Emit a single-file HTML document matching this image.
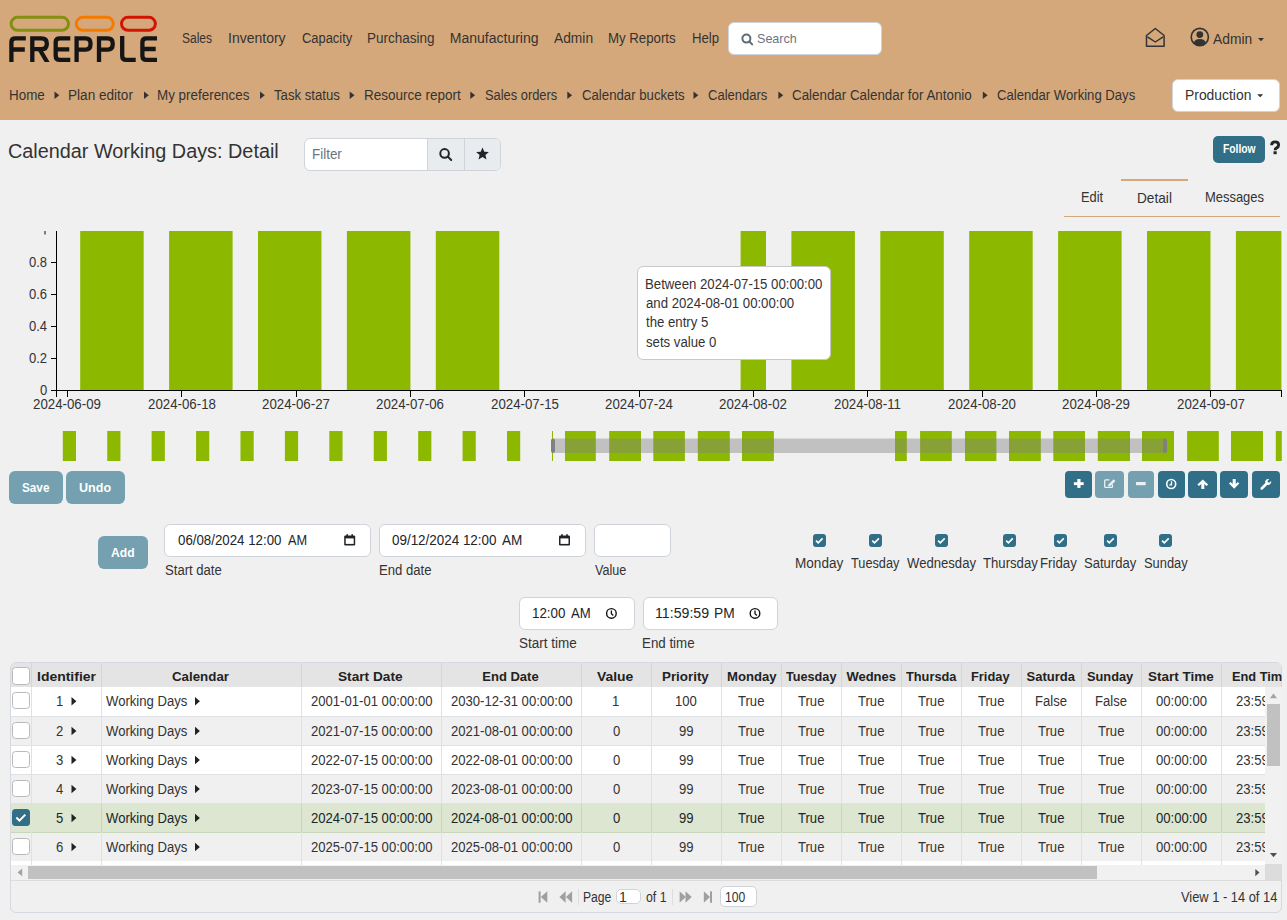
<!DOCTYPE html><html><head><meta charset='utf-8'><style>
html,body{margin:0;padding:0;width:1287px;height:920px;overflow:hidden;background:#f0f0f0;font-family:"Liberation Sans",sans-serif;}
.t{position:absolute;white-space:pre;font-family:"Liberation Sans",sans-serif;}
</style></head><body>
<div style='position:absolute;left:0;top:0;width:1287px;height:120px;background:#d4a87b'></div><div style='position:absolute;left:728px;top:22px;width:152px;height:31px;background:#fff;border:1px solid #ced4da;border-radius:6px'></div><div style='position:absolute;left:1172px;top:79px;width:106px;height:31px;background:#fff;border:1px solid #ced4da;border-radius:6px'></div><div style='position:absolute;left:304px;top:138px;width:195px;height:31px;background:#fff;border:1px solid #ced4da;border-radius:6px;overflow:hidden'><div style='position:absolute;left:122px;top:0;width:37px;height:31px;background:#e9ecef;border-left:1px solid #ced4da'></div><div style='position:absolute;left:159px;top:0;width:36px;height:31px;background:#e9ecef;border-left:1px solid #ced4da'></div></div><div style='position:absolute;left:1213px;top:136px;width:52px;height:27px;background:#306f87;border-radius:5px'></div><div style='position:absolute;left:1121px;top:179px;width:67px;height:2px;background:#d4a87b'></div><div style='position:absolute;left:1064px;top:216px;width:216px;height:1px;background:#d4a87b'></div><div style='position:absolute;left:9px;top:471px;width:54px;height:33px;background:#74a0b0;border-radius:6px'></div><div style='position:absolute;left:66px;top:471px;width:59px;height:33px;background:#74a0b0;border-radius:6px'></div><div style='position:absolute;left:1065px;top:471px;width:27px;height:27px;background:#306f87;border-radius:4px'></div><div style='position:absolute;left:1095px;top:471px;width:29px;height:27px;background:#74a0b0;border-radius:4px'></div><div style='position:absolute;left:1128px;top:471px;width:26px;height:27px;background:#74a0b0;border-radius:4px'></div><div style='position:absolute;left:1158px;top:471px;width:27px;height:27px;background:#306f87;border-radius:4px'></div><div style='position:absolute;left:1188px;top:471px;width:29px;height:27px;background:#306f87;border-radius:4px'></div><div style='position:absolute;left:1220px;top:471px;width:28px;height:27px;background:#306f87;border-radius:4px'></div><div style='position:absolute;left:1252px;top:471px;width:28px;height:27px;background:#306f87;border-radius:4px'></div><div style='position:absolute;left:98px;top:536px;width:50px;height:33px;background:#74a0b0;border-radius:6px'></div><div style='position:absolute;left:164px;top:524px;width:205px;height:31px;background:#fff;border:1px solid #ced4da;border-radius:6px'></div><div style='position:absolute;left:379px;top:524px;width:205px;height:31px;background:#fff;border:1px solid #ced4da;border-radius:6px'></div><div style='position:absolute;left:594px;top:524px;width:75px;height:31px;background:#fff;border:1px solid #ced4da;border-radius:6px'></div><div style='position:absolute;left:519px;top:597px;width:114px;height:31px;background:#fff;border:1px solid #ced4da;border-radius:6px'></div><div style='position:absolute;left:643px;top:597px;width:133px;height:31px;background:#fff;border:1px solid #ced4da;border-radius:6px'></div><div style='position:absolute;left:812.8px;top:534px;width:13px;height:13px;background:#306f87;border-radius:3px'></div><div style='position:absolute;left:869.1px;top:534px;width:13px;height:13px;background:#306f87;border-radius:3px'></div><div style='position:absolute;left:934.9px;top:534px;width:13px;height:13px;background:#306f87;border-radius:3px'></div><div style='position:absolute;left:1003.0px;top:534px;width:13px;height:13px;background:#306f87;border-radius:3px'></div><div style='position:absolute;left:1054.0px;top:534px;width:13px;height:13px;background:#306f87;border-radius:3px'></div><div style='position:absolute;left:1103.9px;top:534px;width:13px;height:13px;background:#306f87;border-radius:3px'></div><div style='position:absolute;left:1158.9px;top:534px;width:13px;height:13px;background:#306f87;border-radius:3px'></div><div style='position:absolute;left:10px;top:662px;width:1270px;height:249px;border:1px solid #d3d9df;border-radius:6px;background:#f0f0f0'></div><div style='position:absolute;left:11px;top:663px;width:1270px;height:24px;background:#e4e4e4;border-top-right-radius:5px;border-top-left-radius:5px'></div><div style='position:absolute;left:11px;top:687px;width:1254px;height:29px;background:#ffffff;'></div><div style='position:absolute;left:11px;top:716px;width:1254px;height:29px;background:#f0f0f0;'></div><div style='position:absolute;left:11px;top:745px;width:1254px;height:29px;background:#ffffff;'></div><div style='position:absolute;left:11px;top:774px;width:1254px;height:29px;background:#f0f0f0;'></div><div style='position:absolute;left:11px;top:803px;width:1254px;height:29px;background:#dce6d1;'></div><div style='position:absolute;left:11px;top:832px;width:1254px;height:29px;background:#f0f0f0;'></div><div style='position:absolute;left:11px;top:716px;width:1254px;height:1px;background:#dee2e6'></div><div style='position:absolute;left:11px;top:745px;width:1254px;height:1px;background:#dee2e6'></div><div style='position:absolute;left:11px;top:774px;width:1254px;height:1px;background:#dee2e6'></div><div style='position:absolute;left:11px;top:803px;width:1254px;height:1px;background:#dee2e6'></div><div style='position:absolute;left:11px;top:832px;width:1254px;height:1px;background:#c9d6bb'></div><div style='position:absolute;left:11px;top:861px;width:1254px;height:1px;background:#dee2e6'></div><div style='position:absolute;left:11px;top:861px;width:1254px;height:4px;background:#fff'></div><div style='position:absolute;left:31px;top:663px;width:1px;height:24px;background:#d6d6d6'></div><div style='position:absolute;left:31px;top:687px;width:1px;height:178px;background:#dee2e6'></div><div style='position:absolute;left:101px;top:663px;width:1px;height:24px;background:#d6d6d6'></div><div style='position:absolute;left:101px;top:687px;width:1px;height:178px;background:#dee2e6'></div><div style='position:absolute;left:301px;top:663px;width:1px;height:24px;background:#d6d6d6'></div><div style='position:absolute;left:301px;top:687px;width:1px;height:178px;background:#dee2e6'></div><div style='position:absolute;left:441px;top:663px;width:1px;height:24px;background:#d6d6d6'></div><div style='position:absolute;left:441px;top:687px;width:1px;height:178px;background:#dee2e6'></div><div style='position:absolute;left:581px;top:663px;width:1px;height:24px;background:#d6d6d6'></div><div style='position:absolute;left:581px;top:687px;width:1px;height:178px;background:#dee2e6'></div><div style='position:absolute;left:651px;top:663px;width:1px;height:24px;background:#d6d6d6'></div><div style='position:absolute;left:651px;top:687px;width:1px;height:178px;background:#dee2e6'></div><div style='position:absolute;left:721px;top:663px;width:1px;height:24px;background:#d6d6d6'></div><div style='position:absolute;left:721px;top:687px;width:1px;height:178px;background:#dee2e6'></div><div style='position:absolute;left:781px;top:663px;width:1px;height:24px;background:#d6d6d6'></div><div style='position:absolute;left:781px;top:687px;width:1px;height:178px;background:#dee2e6'></div><div style='position:absolute;left:841px;top:663px;width:1px;height:24px;background:#d6d6d6'></div><div style='position:absolute;left:841px;top:687px;width:1px;height:178px;background:#dee2e6'></div><div style='position:absolute;left:901px;top:663px;width:1px;height:24px;background:#d6d6d6'></div><div style='position:absolute;left:901px;top:687px;width:1px;height:178px;background:#dee2e6'></div><div style='position:absolute;left:961px;top:663px;width:1px;height:24px;background:#d6d6d6'></div><div style='position:absolute;left:961px;top:687px;width:1px;height:178px;background:#dee2e6'></div><div style='position:absolute;left:1021px;top:663px;width:1px;height:24px;background:#d6d6d6'></div><div style='position:absolute;left:1021px;top:687px;width:1px;height:178px;background:#dee2e6'></div><div style='position:absolute;left:1081px;top:663px;width:1px;height:24px;background:#d6d6d6'></div><div style='position:absolute;left:1081px;top:687px;width:1px;height:178px;background:#dee2e6'></div><div style='position:absolute;left:1141px;top:663px;width:1px;height:24px;background:#d6d6d6'></div><div style='position:absolute;left:1141px;top:687px;width:1px;height:178px;background:#dee2e6'></div><div style='position:absolute;left:1221px;top:663px;width:1px;height:24px;background:#d6d6d6'></div><div style='position:absolute;left:1221px;top:687px;width:1px;height:178px;background:#dee2e6'></div><div style='position:absolute;left:31px;top:803px;width:1234px;height:28px;background:transparent'></div><div style='position:absolute;left:12.3px;top:667.3px;width:15.4px;height:15.4px;background:#fff;border:1px solid #b9b9b9;border-radius:3.5px'></div><div style='position:absolute;left:12.3px;top:692.1px;width:15.4px;height:15.4px;background:#fff;border:1px solid #b9b9b9;border-radius:3.5px'></div><div style='position:absolute;left:12.3px;top:721.8px;width:15.4px;height:15.4px;background:#fff;border:1px solid #b9b9b9;border-radius:3.5px'></div><div style='position:absolute;left:12.3px;top:750.8px;width:15.4px;height:15.4px;background:#fff;border:1px solid #b9b9b9;border-radius:3.5px'></div><div style='position:absolute;left:12.3px;top:779.8px;width:15.4px;height:15.4px;background:#fff;border:1px solid #b9b9b9;border-radius:3.5px'></div><div style='position:absolute;left:12.3px;top:808.8px;width:17.4px;height:17.4px;background:#306f87;border-radius:3.5px'></div><div style='position:absolute;left:12.3px;top:837.8px;width:15.4px;height:15.4px;background:#fff;border:1px solid #b9b9b9;border-radius:3.5px'></div><div style='position:absolute;left:1265px;top:687px;width:17px;height:177px;background:#f1f1f1'></div><div style='position:absolute;left:1267px;top:704px;width:13px;height:62px;background:#c1c1c1'></div><div style='position:absolute;left:11px;top:865px;width:1254px;height:15px;background:#f1f1f1'></div><div style='position:absolute;left:28px;top:866px;width:1069px;height:13px;background:#c1c1c1'></div><div style='position:absolute;left:1265px;top:864px;width:17px;height:16px;background:#dcdcdc'></div><div style='position:absolute;left:11px;top:880px;width:1270px;height:1px;background:#dcdcdc'></div><div style='position:absolute;left:578px;top:889px;width:1px;height:16px;background:#dedede'></div><div style='position:absolute;left:672px;top:889px;width:1px;height:16px;background:#dedede'></div><div style='position:absolute;left:616px;top:889px;width:23px;height:13px;background:#fff;border:1px solid #ced4da;border-radius:5px'></div><div style='position:absolute;left:720px;top:886px;width:35px;height:19px;background:#fff;border:1px solid #ced4da;border-radius:5px'></div><div style='position:absolute;left:101px;top:804px;width:1px;height:28px;background:#c9d6bb'></div><div style='position:absolute;left:301px;top:804px;width:1px;height:28px;background:#c9d6bb'></div><div style='position:absolute;left:441px;top:804px;width:1px;height:28px;background:#c9d6bb'></div><div style='position:absolute;left:581px;top:804px;width:1px;height:28px;background:#c9d6bb'></div><div style='position:absolute;left:651px;top:804px;width:1px;height:28px;background:#c9d6bb'></div><div style='position:absolute;left:721px;top:804px;width:1px;height:28px;background:#c9d6bb'></div><div style='position:absolute;left:781px;top:804px;width:1px;height:28px;background:#c9d6bb'></div><div style='position:absolute;left:841px;top:804px;width:1px;height:28px;background:#c9d6bb'></div><div style='position:absolute;left:901px;top:804px;width:1px;height:28px;background:#c9d6bb'></div><div style='position:absolute;left:961px;top:804px;width:1px;height:28px;background:#c9d6bb'></div><div style='position:absolute;left:1021px;top:804px;width:1px;height:28px;background:#c9d6bb'></div><div style='position:absolute;left:1081px;top:804px;width:1px;height:28px;background:#c9d6bb'></div><div style='position:absolute;left:1141px;top:804px;width:1px;height:28px;background:#c9d6bb'></div><div style='position:absolute;left:1221px;top:804px;width:1px;height:28px;background:#c9d6bb'></div>
<svg style='position:absolute;left:0;top:0' width='1287' height='920' viewBox='0 0 1287 920'><g fill='none' stroke='#5f6b75' stroke-width='2'><circle cx='746.4' cy='38.6' r='4'/><line x1='749.3' y1='41.5' x2='752.2' y2='44.4' stroke-linecap='round'/></g><g fill='none' stroke='#333' stroke-width='1.5' stroke-linejoin='round'><path d='M1146.5 35.5 L1155.3 28.5 L1164.1 35.5 L1164.1 46.2 L1146.5 46.2 Z'/><path d='M1147.5 36.8 L1155.3 42 L1163.1 36.8'/></g><g><circle cx='1199.8' cy='37' r='8.6' fill='none' stroke='#333' stroke-width='1.6'/><circle cx='1199.8' cy='34.6' r='3.4' fill='#333'/><path d='M1193.6 43.4 Q1194.5 39 1199.8 39 Q1205.1 39 1206 43.4 Q1203.5 45.7 1199.8 45.7 Q1196.1 45.7 1193.6 43.4 Z' fill='#333'/></g><path d='M1258 38 L1264 38 L1261 41.2 Z' fill='#333'/><g fill='none' stroke-width='3'>
<rect x='11.1' y='17.3' width='57.4' height='13' rx='6.5' stroke='#848e12'/>
<rect x='76.3' y='17.3' width='37' height='13' rx='6.5' stroke='#f57a00'/>
<rect x='121.5' y='17.3' width='33.9' height='13' rx='6.5' stroke='#d11500'/>
</g><g fill='none' stroke='#151515' stroke-width='4.3' stroke-linejoin='miter'>
<path d='M11.4 62 V42 Q11.4 38.3 15.4 38.3 H25.8 M11.4 49.5 H24.8'/>
<path d='M32.3 62 V38.3 H41.5 Q46.8 38.3 46.8 43.2 V44 Q46.8 49.2 41.5 49.2 H32.3'/>
<path d='M37.6 50 L42.4 50 L49.6 62 L44.6 62 Z' fill='#151515' stroke='none'/>
<path d='M70.3 38.3 H59.8 Q55.7 38.3 55.7 42 V56 Q55.7 59.9 59.8 59.9 H70.3 M55.7 49.3 H69.3'/>
<path d='M76.6 62 V38.3 H85.5 Q90.5 38.3 90.5 43.2 V44.3 Q90.5 49.6 85.5 49.6 H76.6'/>
<path d='M99 62 V38.3 H107.7 Q112.7 38.3 112.7 43.2 V44.3 Q112.7 49.6 107.7 49.6 H99'/>
<path d='M122.2 36 V56 Q122.2 59.9 126.2 59.9 H135.7'/>
<path d='M157 38.3 H146.5 Q142.4 38.3 142.4 42 V56 Q142.4 59.9 146.5 59.9 H157 M142.4 49 H155.7'/>
</g><path d='M54.5 91.6 L59.3 95.3 L54.5 99 Z' fill='#333'/><path d='M144 91.6 L148.8 95.3 L144 99 Z' fill='#333'/><path d='M260 91.6 L264.8 95.3 L260 99 Z' fill='#333'/><path d='M349.7 91.6 L354.5 95.3 L349.7 99 Z' fill='#333'/><path d='M470.3 91.6 L475.1 95.3 L470.3 99 Z' fill='#333'/><path d='M567.3 91.6 L572.0999999999999 95.3 L567.3 99 Z' fill='#333'/><path d='M693.5 91.6 L698.3 95.3 L693.5 99 Z' fill='#333'/><path d='M778.4 91.6 L783.1999999999999 95.3 L778.4 99 Z' fill='#333'/><path d='M982.8 91.6 L987.5999999999999 95.3 L982.8 99 Z' fill='#333'/><path d='M1257.2 94.2 L1263.2 94.2 L1260.2 97.2 Z' fill='#333'/><g fill='none' stroke='#212529' stroke-width='2'><circle cx='444.6' cy='153.4' r='4.3'/><line x1='447.8' y1='156.6' x2='451.2' y2='160' stroke-linecap='round'/></g><path d='M482.5 147.5 L484.3 151.8 L488.9 152.1 L485.4 155 L486.5 159.6 L482.5 157.1 L478.5 159.6 L479.6 155 L476.1 152.1 L480.7 151.8 Z' fill='#212529'/><path d='M1271.6 145.3 Q1271.6 141.9 1275.1 141.9 Q1278.6 141.9 1278.6 144.9 Q1278.6 146.9 1276.6 147.9 Q1275.1 148.7 1275.1 150.3' fill='none' stroke='#212529' stroke-width='2.9'/><rect x='1273.5' y='151.3' width='3.2' height='2.9' fill='#212529'/><g fill='#8cb900'><rect x='80.20' y='231' width='63.50' height='159'/><rect x='169.10' y='231' width='63.50' height='159'/><rect x='258.00' y='231' width='63.50' height='159'/><rect x='346.90' y='231' width='63.50' height='159'/><rect x='435.80' y='231' width='63.50' height='159'/><rect x='740.60' y='231' width='25.40' height='159'/><rect x='791.40' y='231' width='63.50' height='159'/><rect x='880.30' y='231' width='63.50' height='159'/><rect x='969.20' y='231' width='63.50' height='159'/><rect x='1058.10' y='231' width='63.50' height='159'/><rect x='1147.00' y='231' width='63.50' height='159'/><rect x='1235.90' y='231' width='45.50' height='159'/></g><g stroke='#000' stroke-width='1' fill='none' shape-rendering='crispEdges'><path d='M56.5 231 V390.5 H51'/><path d='M56.5 397 V390.5 H1281.5 V397'/><line x1='51' x2='56.5' y1='358.1' y2='358.1'/><line x1='51' x2='56.5' y1='326.2' y2='326.2'/><line x1='51' x2='56.5' y1='294.3' y2='294.3'/><line x1='51' x2='56.5' y1='262.4' y2='262.4'/><line x1='67.5' x2='67.5' y1='390.5' y2='397'/><line x1='181.5' x2='181.5' y1='390.5' y2='397'/><line x1='296.5' x2='296.5' y1='390.5' y2='397'/><line x1='410.5' x2='410.5' y1='390.5' y2='397'/><line x1='524.5' x2='524.5' y1='390.5' y2='397'/><line x1='639.5' x2='639.5' y1='390.5' y2='397'/><line x1='753.5' x2='753.5' y1='390.5' y2='397'/><line x1='867.5' x2='867.5' y1='390.5' y2='397'/><line x1='982.5' x2='982.5' y1='390.5' y2='397'/><line x1='1096.5' x2='1096.5' y1='390.5' y2='397'/><line x1='1210.5' x2='1210.5' y1='390.5' y2='397'/></g><rect x='44.4' y='231' width='1.2' height='3.5' fill='#333'/><g fill='#8cb900'><rect x='62.80' y='431' width='13.2' height='30'/><rect x='107.22' y='431' width='13.2' height='30'/><rect x='151.64' y='431' width='13.2' height='30'/><rect x='196.06' y='431' width='13.2' height='30'/><rect x='240.48' y='431' width='13.2' height='30'/><rect x='284.90' y='431' width='13.2' height='30'/><rect x='329.32' y='431' width='13.2' height='30'/><rect x='373.74' y='431' width='13.2' height='30'/><rect x='418.16' y='431' width='13.2' height='30'/><rect x='462.58' y='431' width='13.2' height='30'/><rect x='507.00' y='431' width='13.2' height='30'/><rect x='565' y='431' width='30.8' height='30'/><rect x='609.2' y='431' width='31.8' height='30'/><rect x='653.3' y='431' width='31.6' height='30'/><rect x='697.8' y='431' width='32.0' height='30'/><rect x='742' y='431' width='31.9' height='30'/><rect x='895' y='431' width='11.8' height='30'/><rect x='920.1' y='431' width='31.7' height='30'/><rect x='965' y='431' width='31.4' height='30'/><rect x='1009' y='431' width='31.8' height='30'/><rect x='1053.3' y='431' width='31.7' height='30'/><rect x='1097.8' y='431' width='32.2' height='30'/><rect x='1142' y='431' width='32.0' height='30'/><rect x='1187.1' y='431' width='31.7' height='30'/><rect x='1231' y='431' width='32.0' height='30'/><rect x='1275.8' y='431' width='6.0' height='30'/><rect x='552' y='431' width='1' height='30'/></g><rect x='552' y='438.5' width='614' height='14.5' rx='3' fill='rgba(128,128,128,0.42)'/><rect x='551' y='438.5' width='4' height='14.5' rx='2' fill='#808080'/><rect x='1163' y='438.5' width='4' height='14.5' rx='2' fill='#808080'/><g fill='#fff'><rect x='1073.9' y='482.2' width='9.8' height='2.9'/><rect x='1077.3' y='479' width='3.2' height='8.9'/><rect x='1136' y='482' width='9.7' height='3.2' rx='0.6' fill='rgba(255,255,255,0.85)'/></g><g fill='none' stroke='rgba(255,255,255,0.85)' stroke-width='1.3'><path d='M1109.4 479.8 H1105.6 Q1104.7 479.8 1104.7 480.7 V486.4 Q1104.7 487.3 1105.6 487.3 H1111.6 Q1112.5 487.3 1112.5 486.4 V484.6'/></g><path d='M1108 486.3 L1108.4 484.4 L1113.6 479.2 L1115.4 481 L1110.2 486.2 Z' fill='rgba(255,255,255,0.85)'/><g fill='none' stroke='#fff'><circle cx='1171.2' cy='484' r='4.5' stroke-width='1.6'/><path d='M1171.5 481.2 V484.9 H1169.3' stroke-width='1.3'/></g><g fill='#fff'><path d='M1202.8 479.5 L1208.1 484.5 L1206.6 486 L1204.3 483.9 V489 H1201.3 V483.9 L1199 486 L1197.4 484.5 Z'/><path d='M1234.2 488.7 L1239.3 483.5 L1237.8 482 L1235.7 484.1 V479.1 H1232.7 V484.1 L1230.6 482 L1229 483.5 Z'/><path d='M1262.6 489.4 Q1261.6 490.2 1260.8 489.4 Q1260 488.6 1260.8 487.6 L1265.3 483.1 Q1264.6 480.9 1266.1 479.7 Q1267.4 478.7 1269.3 479.2 L1267.4 481.1 L1268 482.3 L1269.3 482.8 L1271.1 481 Q1271.5 482.9 1270.3 484.1 Q1269 485.3 1267.1 484.9 Z'/></g><g fill='#212529'><rect x='344.2' y='535.4000000000001' width='11' height='10' rx='1.2'/><rect x='345.7' y='538.4000000000001' width='8' height='5.5' fill='#fff'/><rect x='346.4' y='534.2' width='1.6' height='2.2'/><rect x='351.4' y='534.2' width='1.6' height='2.2'/></g><g fill='#212529'><rect x='559' y='535.4000000000001' width='11' height='10' rx='1.2'/><rect x='560.5' y='538.4000000000001' width='8' height='5.5' fill='#fff'/><rect x='561.2' y='534.2' width='1.6' height='2.2'/><rect x='566.2' y='534.2' width='1.6' height='2.2'/></g><g fill='none' stroke='#111'><circle cx='611.4000000000001' cy='613.4' r='4.8' stroke-width='1.4'/><path d='M611.4000000000001 610.6 V613.8 L613.3000000000001 615.4' stroke-width='1.3'/></g><g fill='none' stroke='#111'><circle cx='755.0' cy='613.4' r='4.8' stroke-width='1.4'/><path d='M755.0 610.6 V613.8 L756.9 615.4' stroke-width='1.3'/></g><path d='M816.0 540.6 L818.1999999999999 542.8 L822.5999999999999 538.4' fill='none' stroke='#fff' stroke-width='1.7'/><path d='M872.3000000000001 540.6 L874.5 542.8 L878.9 538.4' fill='none' stroke='#fff' stroke-width='1.7'/><path d='M938.1 540.6 L940.3 542.8 L944.6999999999999 538.4' fill='none' stroke='#fff' stroke-width='1.7'/><path d='M1006.2 540.6 L1008.4 542.8 L1012.8 538.4' fill='none' stroke='#fff' stroke-width='1.7'/><path d='M1057.2 540.6 L1059.4 542.8 L1063.8 538.4' fill='none' stroke='#fff' stroke-width='1.7'/><path d='M1107.1000000000001 540.6 L1109.3000000000002 542.8 L1113.7 538.4' fill='none' stroke='#fff' stroke-width='1.7'/><path d='M1162.1000000000001 540.6 L1164.3000000000002 542.8 L1168.7 538.4' fill='none' stroke='#fff' stroke-width='1.7'/><path d='M71.5 696.9 L76.4 701.1999999999999 L71.5 705.5 Z' fill='#222'/><path d='M195 696.9 L199.9 701.1999999999999 L195 705.5 Z' fill='#222'/><path d='M71.5 726.7 L76.4 731.0 L71.5 735.3000000000001 Z' fill='#222'/><path d='M195 726.7 L199.9 731.0 L195 735.3000000000001 Z' fill='#222'/><path d='M71.5 755.7 L76.4 760.0 L71.5 764.3000000000001 Z' fill='#222'/><path d='M195 755.7 L199.9 760.0 L195 764.3000000000001 Z' fill='#222'/><path d='M71.5 784.7 L76.4 789.0 L71.5 793.3000000000001 Z' fill='#222'/><path d='M195 784.7 L199.9 789.0 L195 793.3000000000001 Z' fill='#222'/><path d='M16.3 817.5999999999999 L19.5 820.5999999999999 L25.3 814.5999999999999' fill='none' stroke='#fff' stroke-width='2'/><path d='M71.5 813.7 L76.4 818.0 L71.5 822.3000000000001 Z' fill='#222'/><path d='M195 813.7 L199.9 818.0 L195 822.3000000000001 Z' fill='#222'/><path d='M71.5 842.7 L76.4 847.0 L71.5 851.3000000000001 Z' fill='#222'/><path d='M195 842.7 L199.9 847.0 L195 851.3000000000001 Z' fill='#222'/><path d='M1269.9 698.2 L1273.5 693.4 L1277 698.2 Z' fill='#a3a3a3'/><path d='M1269.9 853 L1277 853 L1273.5 857.2 Z' fill='#505050'/><path d='M22.2 868.5 L17.5 872.4 L22.2 876.3 Z' fill='#a3a3a3'/><path d='M1255.3 869 L1259.5 872.6 L1255.3 876.2 Z' fill='#505050'/><g fill='#a0a0a0'><rect x='538.6' y='891.3' width='2' height='11.5'/><path d='M547.3 891.3 V902.8 L540.8 897 Z'/><path d='M565.6 891.3 V902.8 L559.4 897 Z'/><path d='M572.1 891.3 V902.8 L565.9 897 Z'/><path d='M679.6 891.3 V902.8 L685.8 897 Z'/><path d='M685.5 891.3 V902.8 L691.7 897 Z'/><path d='M703.8 891.3 V902.8 L710 897 Z'/><rect x='710' y='891.3' width='2' height='11.5'/></g></svg>
<div style='position:absolute;left:637px;top:266px;width:192px;height:92px;background:#fff;border:1px solid #c8c8c8;border-radius:6px'></div>
<span class=t style='left:182.40px;top:31.20px;font-size:14px;line-height:14px;color:#333333;transform:scaleX(0.8566);transform-origin:0 0;'>Sales</span><span class=t style='left:228.00px;top:31.20px;font-size:14px;line-height:14px;color:#333333;'>Inventory</span><span class=t style='left:301.80px;top:31.20px;font-size:14px;line-height:14px;color:#333333;transform:scaleX(0.9216);transform-origin:0 0;'>Capacity</span><span class=t style='left:367.34px;top:31.20px;font-size:14px;line-height:14px;color:#333333;transform:scaleX(0.9626);transform-origin:0 0;'>Purchasing</span><span class=t style='left:449.80px;top:31.20px;font-size:14px;line-height:14px;color:#333333;'>Manufacturing</span><span class=t style='left:554.20px;top:31.20px;font-size:14px;line-height:14px;color:#333333;transform:scaleX(0.9847);transform-origin:0 0;'>Admin</span><span class=t style='left:608.45px;top:31.20px;font-size:14px;line-height:14px;color:#333333;transform:scaleX(0.9451);transform-origin:0 0;'>My Reports</span><span class=t style='left:692.06px;top:31.20px;font-size:14px;line-height:14px;color:#333333;transform:scaleX(0.9426);transform-origin:0 0;'>Help</span><span class=t style='left:756.60px;top:32.00px;font-size:13px;line-height:13px;color:#6c757d;transform:scaleX(0.9668);transform-origin:0 0;'>Search</span><span class=t style='left:1213.00px;top:31.90px;font-size:14px;line-height:14px;color:#333333;transform:scaleX(0.9872);transform-origin:0 0;'>Admin</span><span class=t style='left:8.84px;top:88.00px;font-size:14px;line-height:14px;color:#333333;transform:scaleX(0.9574);transform-origin:0 0;'>Home</span><span class=t style='left:68.43px;top:88.00px;font-size:14px;line-height:14px;color:#333333;transform:scaleX(0.9703);transform-origin:0 0;'>Plan editor</span><span class=t style='left:157.34px;top:88.00px;font-size:14px;line-height:14px;color:#333333;transform:scaleX(0.9583);transform-origin:0 0;'>My preferences</span><span class=t style='left:274.00px;top:88.00px;font-size:14px;line-height:14px;color:#333333;transform:scaleX(0.9411);transform-origin:0 0;'>Task status</span><span class=t style='left:363.54px;top:88.00px;font-size:14px;line-height:14px;color:#333333;transform:scaleX(0.9649);transform-origin:0 0;'>Resource report</span><span class=t style='left:484.80px;top:88.00px;font-size:14px;line-height:14px;color:#333333;transform:scaleX(0.9187);transform-origin:0 0;'>Sales orders</span><span class=t style='left:581.60px;top:88.00px;font-size:14px;line-height:14px;color:#333333;transform:scaleX(0.9426);transform-origin:0 0;'>Calendar buckets</span><span class=t style='left:708.20px;top:88.00px;font-size:14px;line-height:14px;color:#333333;transform:scaleX(0.9293);transform-origin:0 0;'>Calendars</span><span class=t style='left:792.00px;top:88.00px;font-size:14px;line-height:14px;color:#333333;transform:scaleX(0.9544);transform-origin:0 0;'>Calendar Calendar for Antonio</span><span class=t style='left:997.40px;top:88.00px;font-size:14px;line-height:14px;color:#333333;transform:scaleX(0.9364);transform-origin:0 0;'>Calendar Working Days</span><span class=t style='left:1184.71px;top:87.60px;font-size:14px;line-height:14px;color:#333333;transform:scaleX(0.9916);transform-origin:0 0;'>Production</span><span class=t style='left:8.31px;top:141.00px;font-size:20px;line-height:20px;color:#333333;transform:scaleX(0.9914);transform-origin:0 0;'>Calendar Working Days: Detail</span><span class=t style='left:312.44px;top:147.20px;font-size:14px;line-height:14px;color:#6c757d;transform:scaleX(0.9590);transform-origin:0 0;'>Filter</span><span class=t style='left:1223.00px;top:143.00px;font-size:12px;line-height:12px;color:#fff;font-weight:bold;transform:scaleX(0.8562);transform-origin:0 0;'>Follow</span><span class=t style='left:1081.14px;top:189.40px;font-size:15px;line-height:15px;color:#333333;transform:scaleX(0.8567);transform-origin:0 0;'>Edit</span><span class=t style='left:1136.69px;top:190.40px;font-size:15px;line-height:15px;color:#333333;transform:scaleX(0.9104);transform-origin:0 0;'>Detail</span><span class=t style='left:1204.64px;top:189.40px;font-size:15px;line-height:15px;color:#333333;transform:scaleX(0.8629);transform-origin:0 0;'>Messages</span><span class=t style='left:40.26px;top:382.90px;font-size:14px;line-height:14px;color:#333333;transform:scaleX(0.9300);transform-origin:0 0;'>0</span><span class=t style='left:29.40px;top:351.00px;font-size:14px;line-height:14px;color:#333333;transform:scaleX(0.9300);transform-origin:0 0;'>0.2</span><span class=t style='left:29.40px;top:319.10px;font-size:14px;line-height:14px;color:#333333;transform:scaleX(0.9300);transform-origin:0 0;'>0.4</span><span class=t style='left:29.40px;top:287.20px;font-size:14px;line-height:14px;color:#333333;transform:scaleX(0.9300);transform-origin:0 0;'>0.6</span><span class=t style='left:29.40px;top:255.30px;font-size:14px;line-height:14px;color:#333333;transform:scaleX(0.9300);transform-origin:0 0;'>0.8</span><span class=t style='left:33.42px;top:397.00px;font-size:14px;line-height:14px;color:#333333;transform:scaleX(0.9480);transform-origin:0 0;'>2024-06-09</span><span class=t style='left:147.76px;top:397.00px;font-size:14px;line-height:14px;color:#333333;transform:scaleX(0.9480);transform-origin:0 0;'>2024-06-18</span><span class=t style='left:262.10px;top:397.00px;font-size:14px;line-height:14px;color:#333333;transform:scaleX(0.9480);transform-origin:0 0;'>2024-06-27</span><span class=t style='left:376.43px;top:397.00px;font-size:14px;line-height:14px;color:#333333;transform:scaleX(0.9480);transform-origin:0 0;'>2024-07-06</span><span class=t style='left:490.77px;top:397.00px;font-size:14px;line-height:14px;color:#333333;transform:scaleX(0.9480);transform-origin:0 0;'>2024-07-15</span><span class=t style='left:605.10px;top:397.00px;font-size:14px;line-height:14px;color:#333333;transform:scaleX(0.9480);transform-origin:0 0;'>2024-07-24</span><span class=t style='left:719.44px;top:397.00px;font-size:14px;line-height:14px;color:#333333;transform:scaleX(0.9480);transform-origin:0 0;'>2024-08-02</span><span class=t style='left:834.27px;top:397.00px;font-size:14px;line-height:14px;color:#333333;transform:scaleX(0.9480);transform-origin:0 0;'>2024-08-11</span><span class=t style='left:948.11px;top:397.00px;font-size:14px;line-height:14px;color:#333333;transform:scaleX(0.9480);transform-origin:0 0;'>2024-08-20</span><span class=t style='left:1062.45px;top:397.00px;font-size:14px;line-height:14px;color:#333333;transform:scaleX(0.9480);transform-origin:0 0;'>2024-08-29</span><span class=t style='left:1176.78px;top:397.00px;font-size:14px;line-height:14px;color:#333333;transform:scaleX(0.9480);transform-origin:0 0;'>2024-09-07</span><span class=t style='left:645.36px;top:277.00px;font-size:14px;line-height:14px;color:#333333;transform:scaleX(0.9420);transform-origin:0 0;'>Between 2024-07-15 00:00:00</span><span class=t style='left:646.30px;top:296.20px;font-size:14px;line-height:14px;color:#333333;transform:scaleX(0.9420);transform-origin:0 0;'>and 2024-08-01 00:00:00</span><span class=t style='left:646.30px;top:315.40px;font-size:14px;line-height:14px;color:#333333;transform:scaleX(0.9420);transform-origin:0 0;'>the entry 5</span><span class=t style='left:646.30px;top:334.60px;font-size:14px;line-height:14px;color:#333333;transform:scaleX(0.9420);transform-origin:0 0;'>sets value 0</span><span class=t style='left:22.30px;top:481.00px;font-size:13px;line-height:13px;color:#fff;font-weight:bold;transform:scaleX(0.9027);transform-origin:0 0;'>Save</span><span class=t style='left:79.40px;top:481.00px;font-size:13px;line-height:13px;color:#fff;font-weight:bold;transform:scaleX(0.9648);transform-origin:0 0;'>Undo</span><span class=t style='left:111.40px;top:546.10px;font-size:13px;line-height:13px;color:#fff;font-weight:bold;transform:scaleX(0.9317);transform-origin:0 0;'>Add</span><span class=t style='left:177.90px;top:533.00px;font-size:14px;line-height:14px;color:#212529;transform:scaleX(0.9487);transform-origin:0 0;'>06/08/2024 12:00</span><span class=t style='left:287.80px;top:533.00px;font-size:14px;line-height:14px;color:#212529;transform:scaleX(0.9096);transform-origin:0 0;'>AM</span><span class=t style='left:391.70px;top:533.00px;font-size:14px;line-height:14px;color:#212529;transform:scaleX(0.9587);transform-origin:0 0;'>09/12/2024 12:00</span><span class=t style='left:502.00px;top:533.00px;font-size:14px;line-height:14px;color:#212529;transform:scaleX(0.9686);transform-origin:0 0;'>AM</span><span class=t style='left:531.85px;top:605.80px;font-size:14px;line-height:14px;color:#212529;transform:scaleX(0.9548);transform-origin:0 0;'>12:00</span><span class=t style='left:570.90px;top:605.80px;font-size:14px;line-height:14px;color:#212529;transform:scaleX(0.9391);transform-origin:0 0;'>AM</span><span class=t style='left:654.79px;top:605.80px;font-size:14px;line-height:14px;color:#212529;transform:scaleX(1.0119);transform-origin:0 0;'>11:59:59</span><span class=t style='left:713.52px;top:605.80px;font-size:14px;line-height:14px;color:#212529;transform:scaleX(0.9825);transform-origin:0 0;'>PM</span><span class=t style='left:164.80px;top:562.70px;font-size:14px;line-height:14px;color:#333333;transform:scaleX(0.9357);transform-origin:0 0;'>Start date</span><span class=t style='left:378.66px;top:562.70px;font-size:14px;line-height:14px;color:#333333;transform:scaleX(0.9374);transform-origin:0 0;'>End date</span><span class=t style='left:594.50px;top:562.70px;font-size:14px;line-height:14px;color:#333333;transform:scaleX(0.9005);transform-origin:0 0;'>Value</span><span class=t style='left:519.10px;top:636.00px;font-size:14px;line-height:14px;color:#333333;transform:scaleX(0.9631);transform-origin:0 0;'>Start time</span><span class=t style='left:642.25px;top:636.00px;font-size:14px;line-height:14px;color:#333333;transform:scaleX(0.9511);transform-origin:0 0;'>End time</span><span class=t style='left:795.23px;top:556.20px;font-size:14px;line-height:14px;color:#333333;transform:scaleX(0.9691);transform-origin:0 0;'>Monday</span><span class=t style='left:851.20px;top:556.20px;font-size:14px;line-height:14px;color:#333333;transform:scaleX(0.9102);transform-origin:0 0;'>Tuesday</span><span class=t style='left:906.70px;top:556.20px;font-size:14px;line-height:14px;color:#333333;transform:scaleX(0.9365);transform-origin:0 0;'>Wednesday</span><span class=t style='left:982.50px;top:556.20px;font-size:14px;line-height:14px;color:#333333;transform:scaleX(0.9390);transform-origin:0 0;'>Thursday</span><span class=t style='left:1040.45px;top:556.20px;font-size:14px;line-height:14px;color:#333333;transform:scaleX(0.9473);transform-origin:0 0;'>Friday</span><span class=t style='left:1084.30px;top:556.20px;font-size:14px;line-height:14px;color:#333333;transform:scaleX(0.9316);transform-origin:0 0;'>Saturday</span><span class=t style='left:1143.70px;top:556.20px;font-size:14px;line-height:14px;color:#333333;transform:scaleX(0.9203);transform-origin:0 0;'>Sunday</span><span class=t style='left:36.80px;top:670.00px;font-size:13px;line-height:13px;color:#222;font-weight:bold;transform:scaleX(1.0741);transform-origin:0 0;'>Identifier</span><span class=t style='left:172.10px;top:670.00px;font-size:13px;line-height:13px;color:#222;font-weight:bold;transform:scaleX(1.0239);transform-origin:0 0;'>Calendar</span><span class=t style='left:338.30px;top:670.00px;font-size:13px;line-height:13px;color:#222;font-weight:bold;transform:scaleX(1.0510);transform-origin:0 0;'>Start Date</span><span class=t style='left:482.30px;top:670.00px;font-size:13px;line-height:13px;color:#222;font-weight:bold;'>End Date</span><span class=t style='left:597.40px;top:670.00px;font-size:13px;line-height:13px;color:#222;font-weight:bold;transform:scaleX(1.0701);transform-origin:0 0;'>Value</span><span class=t style='left:661.80px;top:670.00px;font-size:13px;line-height:13px;color:#222;font-weight:bold;transform:scaleX(1.0285);transform-origin:0 0;'>Priority</span><span class=t style='left:726.70px;top:670.00px;font-size:13px;line-height:13px;color:#222;font-weight:bold;transform:scaleX(1.0084);transform-origin:0 0;'>Monday</span><span class=t style='left:786.00px;top:670.00px;font-size:13px;line-height:13px;color:#222;font-weight:bold;transform:scaleX(0.9744);transform-origin:0 0;'>Tuesday</span><span class=t style='left:846.40px;top:670.00px;font-size:13px;line-height:13px;color:#222;font-weight:bold;'>Wednes</span><span class=t style='left:906.30px;top:670.00px;font-size:13px;line-height:13px;color:#222;font-weight:bold;transform:scaleX(0.9836);transform-origin:0 0;'>Thursda</span><span class=t style='left:970.70px;top:670.00px;font-size:13px;line-height:13px;color:#222;font-weight:bold;transform:scaleX(0.9879);transform-origin:0 0;'>Friday</span><span class=t style='left:1026.50px;top:670.00px;font-size:13px;line-height:13px;color:#222;font-weight:bold;'>Saturda</span><span class=t style='left:1086.90px;top:670.00px;font-size:13px;line-height:13px;color:#222;font-weight:bold;transform:scaleX(0.9848);transform-origin:0 0;'>Sunday</span><span class=t style='left:1147.70px;top:670.00px;font-size:13px;line-height:13px;color:#222;font-weight:bold;transform:scaleX(1.0363);transform-origin:0 0;'>Start Time</span><span class=t style='left:1232.10px;top:670.00px;font-size:13px;line-height:13px;color:#222;font-weight:bold;transform:scaleX(0.9845);transform-origin:0 0;'>End Tim</span><span class=t style='left:55.59px;top:694.00px;font-size:14px;line-height:14px;color:#333333;transform:scaleX(0.9350);transform-origin:0 0;'>1</span><span class=t style='left:106.30px;top:694.00px;font-size:14px;line-height:14px;color:#333333;transform:scaleX(0.9369);transform-origin:0 0;'>Working Days</span><span class=t style='left:310.73px;top:694.00px;font-size:14px;line-height:14px;color:#333333;transform:scaleX(0.9350);transform-origin:0 0;'>2001-01-01 00:00:00</span><span class=t style='left:450.93px;top:694.00px;font-size:14px;line-height:14px;color:#333333;transform:scaleX(0.9350);transform-origin:0 0;'>2030-12-31 00:00:00</span><span class=t style='left:612.29px;top:694.00px;font-size:14px;line-height:14px;color:#333333;transform:scaleX(0.9350);transform-origin:0 0;'>1</span><span class=t style='left:675.31px;top:694.00px;font-size:14px;line-height:14px;color:#333333;transform:scaleX(0.9350);transform-origin:0 0;'>100</span><span class=t style='left:738.19px;top:694.00px;font-size:14px;line-height:14px;color:#333333;transform:scaleX(0.9350);transform-origin:0 0;'>True</span><span class=t style='left:798.19px;top:694.00px;font-size:14px;line-height:14px;color:#333333;transform:scaleX(0.9350);transform-origin:0 0;'>True</span><span class=t style='left:858.19px;top:694.00px;font-size:14px;line-height:14px;color:#333333;transform:scaleX(0.9350);transform-origin:0 0;'>True</span><span class=t style='left:918.19px;top:694.00px;font-size:14px;line-height:14px;color:#333333;transform:scaleX(0.9350);transform-origin:0 0;'>True</span><span class=t style='left:978.19px;top:694.00px;font-size:14px;line-height:14px;color:#333333;transform:scaleX(0.9350);transform-origin:0 0;'>True</span><span class=t style='left:1034.93px;top:694.00px;font-size:14px;line-height:14px;color:#333333;transform:scaleX(0.9350);transform-origin:0 0;'>False</span><span class=t style='left:1094.93px;top:694.00px;font-size:14px;line-height:14px;color:#333333;transform:scaleX(0.9350);transform-origin:0 0;'>False</span><span class=t style='left:1155.72px;top:694.00px;font-size:14px;line-height:14px;color:#333333;transform:scaleX(0.9350);transform-origin:0 0;'>00:00:00</span><div style='position:absolute;left:1221px;top:690.00px;width:44px;height:22px;overflow:hidden'><span class=t style='left:15.40px;top:4px;font-size:14px;line-height:14px;color:#333333;transform:scaleX(0.9350);transform-origin:0 0;'>23:59:59</span></div><span class=t style='left:56.06px;top:724.00px;font-size:14px;line-height:14px;color:#333333;transform:scaleX(0.9350);transform-origin:0 0;'>2</span><span class=t style='left:106.30px;top:724.00px;font-size:14px;line-height:14px;color:#333333;transform:scaleX(0.9369);transform-origin:0 0;'>Working Days</span><span class=t style='left:310.73px;top:724.00px;font-size:14px;line-height:14px;color:#333333;transform:scaleX(0.9350);transform-origin:0 0;'>2021-07-15 00:00:00</span><span class=t style='left:450.93px;top:724.00px;font-size:14px;line-height:14px;color:#333333;transform:scaleX(0.9350);transform-origin:0 0;'>2021-08-01 00:00:00</span><span class=t style='left:612.76px;top:724.00px;font-size:14px;line-height:14px;color:#333333;transform:scaleX(0.9350);transform-origin:0 0;'>0</span><span class=t style='left:679.42px;top:724.00px;font-size:14px;line-height:14px;color:#333333;transform:scaleX(0.9350);transform-origin:0 0;'>99</span><span class=t style='left:738.19px;top:724.00px;font-size:14px;line-height:14px;color:#333333;transform:scaleX(0.9350);transform-origin:0 0;'>True</span><span class=t style='left:798.19px;top:724.00px;font-size:14px;line-height:14px;color:#333333;transform:scaleX(0.9350);transform-origin:0 0;'>True</span><span class=t style='left:858.19px;top:724.00px;font-size:14px;line-height:14px;color:#333333;transform:scaleX(0.9350);transform-origin:0 0;'>True</span><span class=t style='left:918.19px;top:724.00px;font-size:14px;line-height:14px;color:#333333;transform:scaleX(0.9350);transform-origin:0 0;'>True</span><span class=t style='left:978.19px;top:724.00px;font-size:14px;line-height:14px;color:#333333;transform:scaleX(0.9350);transform-origin:0 0;'>True</span><span class=t style='left:1038.19px;top:724.00px;font-size:14px;line-height:14px;color:#333333;transform:scaleX(0.9350);transform-origin:0 0;'>True</span><span class=t style='left:1098.19px;top:724.00px;font-size:14px;line-height:14px;color:#333333;transform:scaleX(0.9350);transform-origin:0 0;'>True</span><span class=t style='left:1155.72px;top:724.00px;font-size:14px;line-height:14px;color:#333333;transform:scaleX(0.9350);transform-origin:0 0;'>00:00:00</span><div style='position:absolute;left:1221px;top:720.00px;width:44px;height:22px;overflow:hidden'><span class=t style='left:15.40px;top:4px;font-size:14px;line-height:14px;color:#333333;transform:scaleX(0.9350);transform-origin:0 0;'>23:59:59</span></div><span class=t style='left:56.06px;top:753.00px;font-size:14px;line-height:14px;color:#333333;transform:scaleX(0.9350);transform-origin:0 0;'>3</span><span class=t style='left:106.30px;top:753.00px;font-size:14px;line-height:14px;color:#333333;transform:scaleX(0.9369);transform-origin:0 0;'>Working Days</span><span class=t style='left:310.73px;top:753.00px;font-size:14px;line-height:14px;color:#333333;transform:scaleX(0.9350);transform-origin:0 0;'>2022-07-15 00:00:00</span><span class=t style='left:450.93px;top:753.00px;font-size:14px;line-height:14px;color:#333333;transform:scaleX(0.9350);transform-origin:0 0;'>2022-08-01 00:00:00</span><span class=t style='left:612.76px;top:753.00px;font-size:14px;line-height:14px;color:#333333;transform:scaleX(0.9350);transform-origin:0 0;'>0</span><span class=t style='left:679.42px;top:753.00px;font-size:14px;line-height:14px;color:#333333;transform:scaleX(0.9350);transform-origin:0 0;'>99</span><span class=t style='left:738.19px;top:753.00px;font-size:14px;line-height:14px;color:#333333;transform:scaleX(0.9350);transform-origin:0 0;'>True</span><span class=t style='left:798.19px;top:753.00px;font-size:14px;line-height:14px;color:#333333;transform:scaleX(0.9350);transform-origin:0 0;'>True</span><span class=t style='left:858.19px;top:753.00px;font-size:14px;line-height:14px;color:#333333;transform:scaleX(0.9350);transform-origin:0 0;'>True</span><span class=t style='left:918.19px;top:753.00px;font-size:14px;line-height:14px;color:#333333;transform:scaleX(0.9350);transform-origin:0 0;'>True</span><span class=t style='left:978.19px;top:753.00px;font-size:14px;line-height:14px;color:#333333;transform:scaleX(0.9350);transform-origin:0 0;'>True</span><span class=t style='left:1038.19px;top:753.00px;font-size:14px;line-height:14px;color:#333333;transform:scaleX(0.9350);transform-origin:0 0;'>True</span><span class=t style='left:1098.19px;top:753.00px;font-size:14px;line-height:14px;color:#333333;transform:scaleX(0.9350);transform-origin:0 0;'>True</span><span class=t style='left:1155.72px;top:753.00px;font-size:14px;line-height:14px;color:#333333;transform:scaleX(0.9350);transform-origin:0 0;'>00:00:00</span><div style='position:absolute;left:1221px;top:749.00px;width:44px;height:22px;overflow:hidden'><span class=t style='left:15.40px;top:4px;font-size:14px;line-height:14px;color:#333333;transform:scaleX(0.9350);transform-origin:0 0;'>23:59:59</span></div><span class=t style='left:56.06px;top:782.00px;font-size:14px;line-height:14px;color:#333333;transform:scaleX(0.9350);transform-origin:0 0;'>4</span><span class=t style='left:106.30px;top:782.00px;font-size:14px;line-height:14px;color:#333333;transform:scaleX(0.9369);transform-origin:0 0;'>Working Days</span><span class=t style='left:310.73px;top:782.00px;font-size:14px;line-height:14px;color:#333333;transform:scaleX(0.9350);transform-origin:0 0;'>2023-07-15 00:00:00</span><span class=t style='left:450.93px;top:782.00px;font-size:14px;line-height:14px;color:#333333;transform:scaleX(0.9350);transform-origin:0 0;'>2023-08-01 00:00:00</span><span class=t style='left:612.76px;top:782.00px;font-size:14px;line-height:14px;color:#333333;transform:scaleX(0.9350);transform-origin:0 0;'>0</span><span class=t style='left:679.42px;top:782.00px;font-size:14px;line-height:14px;color:#333333;transform:scaleX(0.9350);transform-origin:0 0;'>99</span><span class=t style='left:738.19px;top:782.00px;font-size:14px;line-height:14px;color:#333333;transform:scaleX(0.9350);transform-origin:0 0;'>True</span><span class=t style='left:798.19px;top:782.00px;font-size:14px;line-height:14px;color:#333333;transform:scaleX(0.9350);transform-origin:0 0;'>True</span><span class=t style='left:858.19px;top:782.00px;font-size:14px;line-height:14px;color:#333333;transform:scaleX(0.9350);transform-origin:0 0;'>True</span><span class=t style='left:918.19px;top:782.00px;font-size:14px;line-height:14px;color:#333333;transform:scaleX(0.9350);transform-origin:0 0;'>True</span><span class=t style='left:978.19px;top:782.00px;font-size:14px;line-height:14px;color:#333333;transform:scaleX(0.9350);transform-origin:0 0;'>True</span><span class=t style='left:1038.19px;top:782.00px;font-size:14px;line-height:14px;color:#333333;transform:scaleX(0.9350);transform-origin:0 0;'>True</span><span class=t style='left:1098.19px;top:782.00px;font-size:14px;line-height:14px;color:#333333;transform:scaleX(0.9350);transform-origin:0 0;'>True</span><span class=t style='left:1155.72px;top:782.00px;font-size:14px;line-height:14px;color:#333333;transform:scaleX(0.9350);transform-origin:0 0;'>00:00:00</span><div style='position:absolute;left:1221px;top:778.00px;width:44px;height:22px;overflow:hidden'><span class=t style='left:15.40px;top:4px;font-size:14px;line-height:14px;color:#333333;transform:scaleX(0.9350);transform-origin:0 0;'>23:59:59</span></div><span class=t style='left:56.06px;top:811.00px;font-size:14px;line-height:14px;color:#212529;transform:scaleX(0.9350);transform-origin:0 0;'>5</span><span class=t style='left:106.30px;top:811.00px;font-size:14px;line-height:14px;color:#212529;transform:scaleX(0.9369);transform-origin:0 0;'>Working Days</span><span class=t style='left:310.73px;top:811.00px;font-size:14px;line-height:14px;color:#212529;transform:scaleX(0.9350);transform-origin:0 0;'>2024-07-15 00:00:00</span><span class=t style='left:450.93px;top:811.00px;font-size:14px;line-height:14px;color:#212529;transform:scaleX(0.9350);transform-origin:0 0;'>2024-08-01 00:00:00</span><span class=t style='left:612.76px;top:811.00px;font-size:14px;line-height:14px;color:#212529;transform:scaleX(0.9350);transform-origin:0 0;'>0</span><span class=t style='left:679.42px;top:811.00px;font-size:14px;line-height:14px;color:#212529;transform:scaleX(0.9350);transform-origin:0 0;'>99</span><span class=t style='left:738.19px;top:811.00px;font-size:14px;line-height:14px;color:#212529;transform:scaleX(0.9350);transform-origin:0 0;'>True</span><span class=t style='left:798.19px;top:811.00px;font-size:14px;line-height:14px;color:#212529;transform:scaleX(0.9350);transform-origin:0 0;'>True</span><span class=t style='left:858.19px;top:811.00px;font-size:14px;line-height:14px;color:#212529;transform:scaleX(0.9350);transform-origin:0 0;'>True</span><span class=t style='left:918.19px;top:811.00px;font-size:14px;line-height:14px;color:#212529;transform:scaleX(0.9350);transform-origin:0 0;'>True</span><span class=t style='left:978.19px;top:811.00px;font-size:14px;line-height:14px;color:#212529;transform:scaleX(0.9350);transform-origin:0 0;'>True</span><span class=t style='left:1038.19px;top:811.00px;font-size:14px;line-height:14px;color:#212529;transform:scaleX(0.9350);transform-origin:0 0;'>True</span><span class=t style='left:1098.19px;top:811.00px;font-size:14px;line-height:14px;color:#212529;transform:scaleX(0.9350);transform-origin:0 0;'>True</span><span class=t style='left:1155.72px;top:811.00px;font-size:14px;line-height:14px;color:#212529;transform:scaleX(0.9350);transform-origin:0 0;'>00:00:00</span><div style='position:absolute;left:1221px;top:807.00px;width:44px;height:22px;overflow:hidden'><span class=t style='left:15.40px;top:4px;font-size:14px;line-height:14px;color:#212529;transform:scaleX(0.9350);transform-origin:0 0;'>23:59:59</span></div><span class=t style='left:56.06px;top:840.00px;font-size:14px;line-height:14px;color:#333333;transform:scaleX(0.9350);transform-origin:0 0;'>6</span><span class=t style='left:106.30px;top:840.00px;font-size:14px;line-height:14px;color:#333333;transform:scaleX(0.9369);transform-origin:0 0;'>Working Days</span><span class=t style='left:310.73px;top:840.00px;font-size:14px;line-height:14px;color:#333333;transform:scaleX(0.9350);transform-origin:0 0;'>2025-07-15 00:00:00</span><span class=t style='left:450.93px;top:840.00px;font-size:14px;line-height:14px;color:#333333;transform:scaleX(0.9350);transform-origin:0 0;'>2025-08-01 00:00:00</span><span class=t style='left:612.76px;top:840.00px;font-size:14px;line-height:14px;color:#333333;transform:scaleX(0.9350);transform-origin:0 0;'>0</span><span class=t style='left:679.42px;top:840.00px;font-size:14px;line-height:14px;color:#333333;transform:scaleX(0.9350);transform-origin:0 0;'>99</span><span class=t style='left:738.19px;top:840.00px;font-size:14px;line-height:14px;color:#333333;transform:scaleX(0.9350);transform-origin:0 0;'>True</span><span class=t style='left:798.19px;top:840.00px;font-size:14px;line-height:14px;color:#333333;transform:scaleX(0.9350);transform-origin:0 0;'>True</span><span class=t style='left:858.19px;top:840.00px;font-size:14px;line-height:14px;color:#333333;transform:scaleX(0.9350);transform-origin:0 0;'>True</span><span class=t style='left:918.19px;top:840.00px;font-size:14px;line-height:14px;color:#333333;transform:scaleX(0.9350);transform-origin:0 0;'>True</span><span class=t style='left:978.19px;top:840.00px;font-size:14px;line-height:14px;color:#333333;transform:scaleX(0.9350);transform-origin:0 0;'>True</span><span class=t style='left:1038.19px;top:840.00px;font-size:14px;line-height:14px;color:#333333;transform:scaleX(0.9350);transform-origin:0 0;'>True</span><span class=t style='left:1098.19px;top:840.00px;font-size:14px;line-height:14px;color:#333333;transform:scaleX(0.9350);transform-origin:0 0;'>True</span><span class=t style='left:1155.72px;top:840.00px;font-size:14px;line-height:14px;color:#333333;transform:scaleX(0.9350);transform-origin:0 0;'>00:00:00</span><div style='position:absolute;left:1221px;top:836.00px;width:44px;height:22px;overflow:hidden'><span class=t style='left:15.40px;top:4px;font-size:14px;line-height:14px;color:#333333;transform:scaleX(0.9350);transform-origin:0 0;'>23:59:59</span></div><span class=t style='left:582.73px;top:889.80px;font-size:14px;line-height:14px;color:#333333;transform:scaleX(0.8681);transform-origin:0 0;'>Page</span><span class=t style='left:619.00px;top:889.80px;font-size:14px;line-height:14px;color:#333333;'>1</span><span class=t style='left:645.70px;top:889.80px;font-size:14px;line-height:14px;color:#333333;transform:scaleX(0.8826);transform-origin:0 0;'>of 1</span><span class=t style='left:724.83px;top:889.80px;font-size:14px;line-height:14px;color:#333333;transform:scaleX(0.8683);transform-origin:0 0;'>100</span><span class=t style='left:1181.00px;top:889.90px;font-size:14px;line-height:14px;color:#333333;transform:scaleX(0.9189);transform-origin:0 0;'>View 1 - 14 of 14</span>

</body></html>
